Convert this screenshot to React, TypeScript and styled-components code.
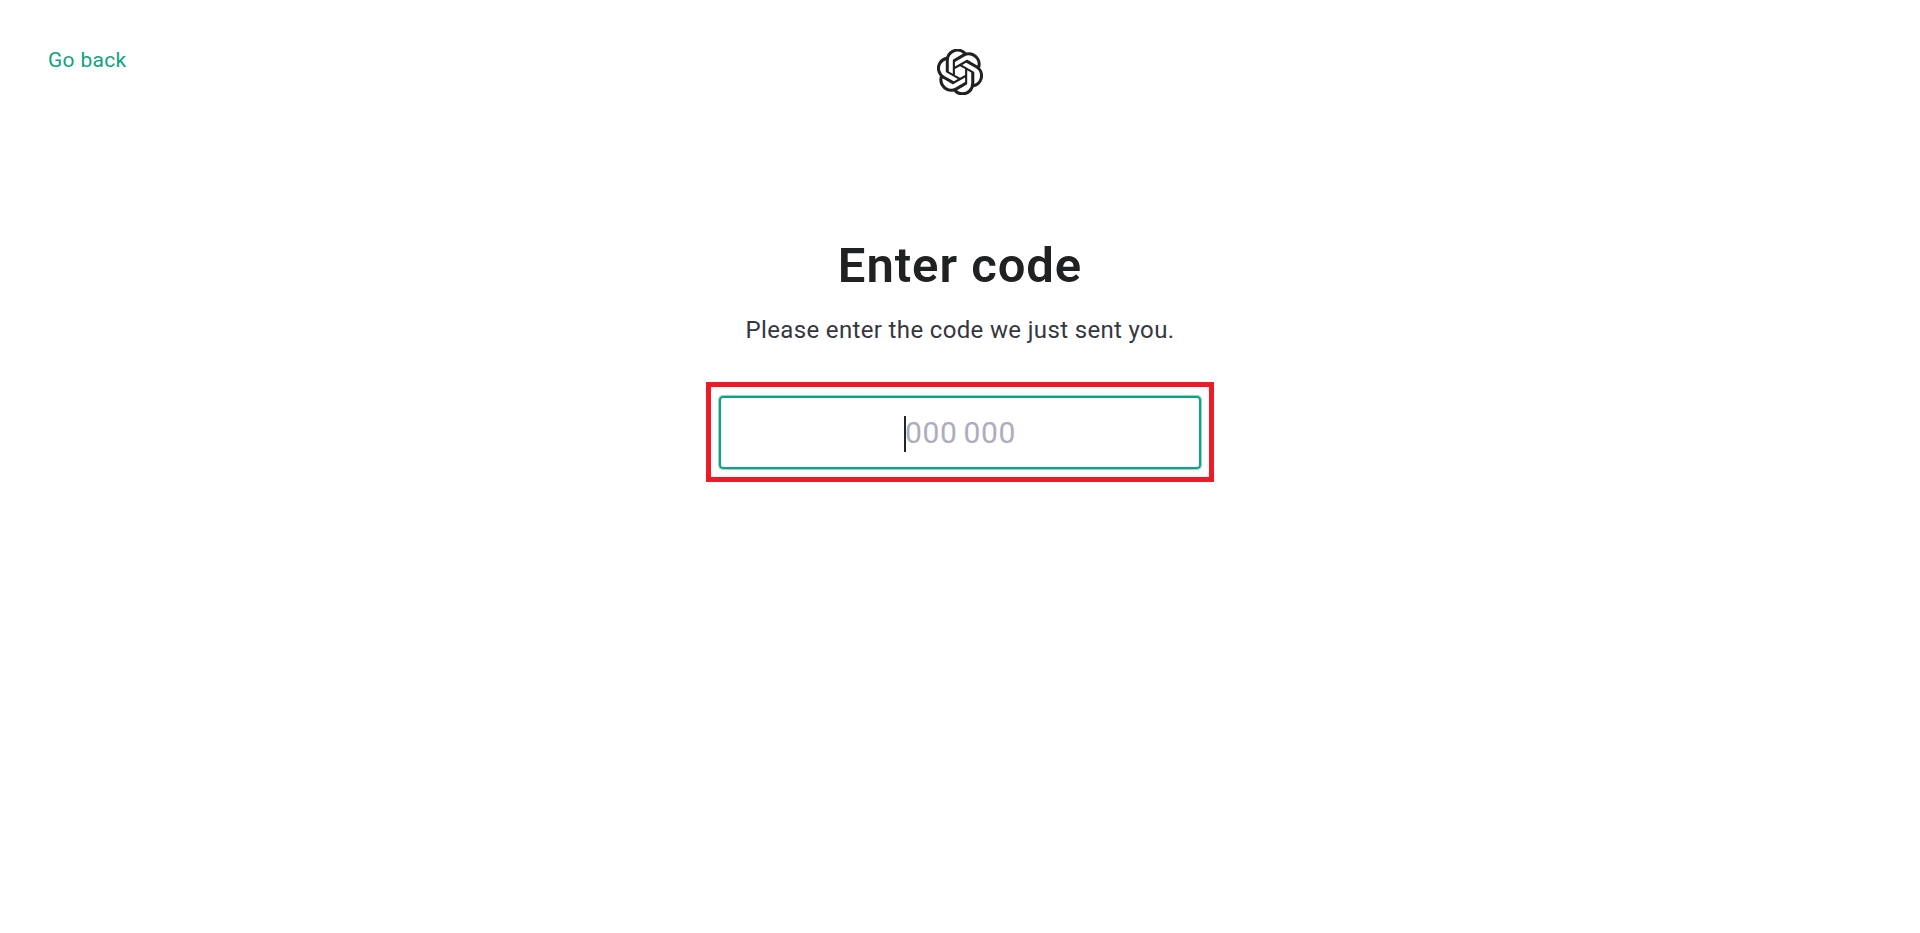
import React from "react";
import styled, { createGlobalStyle } from "styled-components";
import { SiOpenai } from "react-icons/si";

const GlobalStyle = createGlobalStyle`
  *, *::before, *::after { box-sizing: border-box; }
  body {
    margin: 0;
    background: #fff;
    color: #353740;
    font-family: Roboto, Inter, "Liberation Sans", sans-serif;
  }
`;

const Page = styled.div`
  min-height: 933px;
`;

const Header = styled.header`
  display: grid;
  grid-template-columns: 1fr auto 1fr;
  align-items: start;
  height: 95px;
  padding: 48px 48px 0;
`;

const BackLink = styled.a`
  justify-self: start;
  font-size: 21px;
  line-height: 24px;
  letter-spacing: 0.3px;
  color: #10a37f;
  text-decoration: none;
  cursor: pointer;
`;

const Logo = styled(SiOpenai)`
  display: block;
  width: 48px;
  height: 48px;
  padding: 0.6px;
  color: #202123;
`;

const Main = styled.main`
  display: flex;
  flex-direction: column;
  align-items: center;
  padding-top: 141px;
`;

const Title = styled.h1`
  margin: 0;
  font-size: 49px;
  line-height: 60px;
  font-weight: 600;
  letter-spacing: 0.95px;
  color: #202123;
`;

const Description = styled.p`
  margin: 19px 0 0;
  font-size: 24px;
  line-height: 30px;
  letter-spacing: 0.35px;
`;

const Highlight = styled.div`
  display: flex;
  width: 508px;
  height: 100px;
  margin-top: 37px;
  padding: 9px 8px 8px;
  border: 5px solid #ed1c24;
`;

const CodeField = styled.div`
  flex: 1;
  display: flex;
  align-items: center;
  justify-content: center;
  border: 2px solid #10a37f;
  border-radius: 4px;
  box-shadow: 0 0 0 1px rgba(16, 163, 127, 0.45);
`;

const Caret = styled.span`
  width: 2px;
  height: 36px;
  margin-top: 2px;
  background: #202533;
`;

const Placeholder = styled.span`
  margin-left: -1px;
  font-size: 30px;
  line-height: 36px;
  letter-spacing: 0.6px;
  word-spacing: -1.9px;
  color: #acacbe;
`;

export default function App() {
  return (
    <Page>
      <GlobalStyle />
      <Header>
        <BackLink>Go back</BackLink>
        <Logo />
      </Header>
      <Main>
        <Title>Enter code</Title>
        <Description>Please enter the code we just sent you.</Description>
        <Highlight>
          <CodeField>
            <Caret />
            <Placeholder>000 000</Placeholder>
          </CodeField>
        </Highlight>
      </Main>
    </Page>
  );
}
